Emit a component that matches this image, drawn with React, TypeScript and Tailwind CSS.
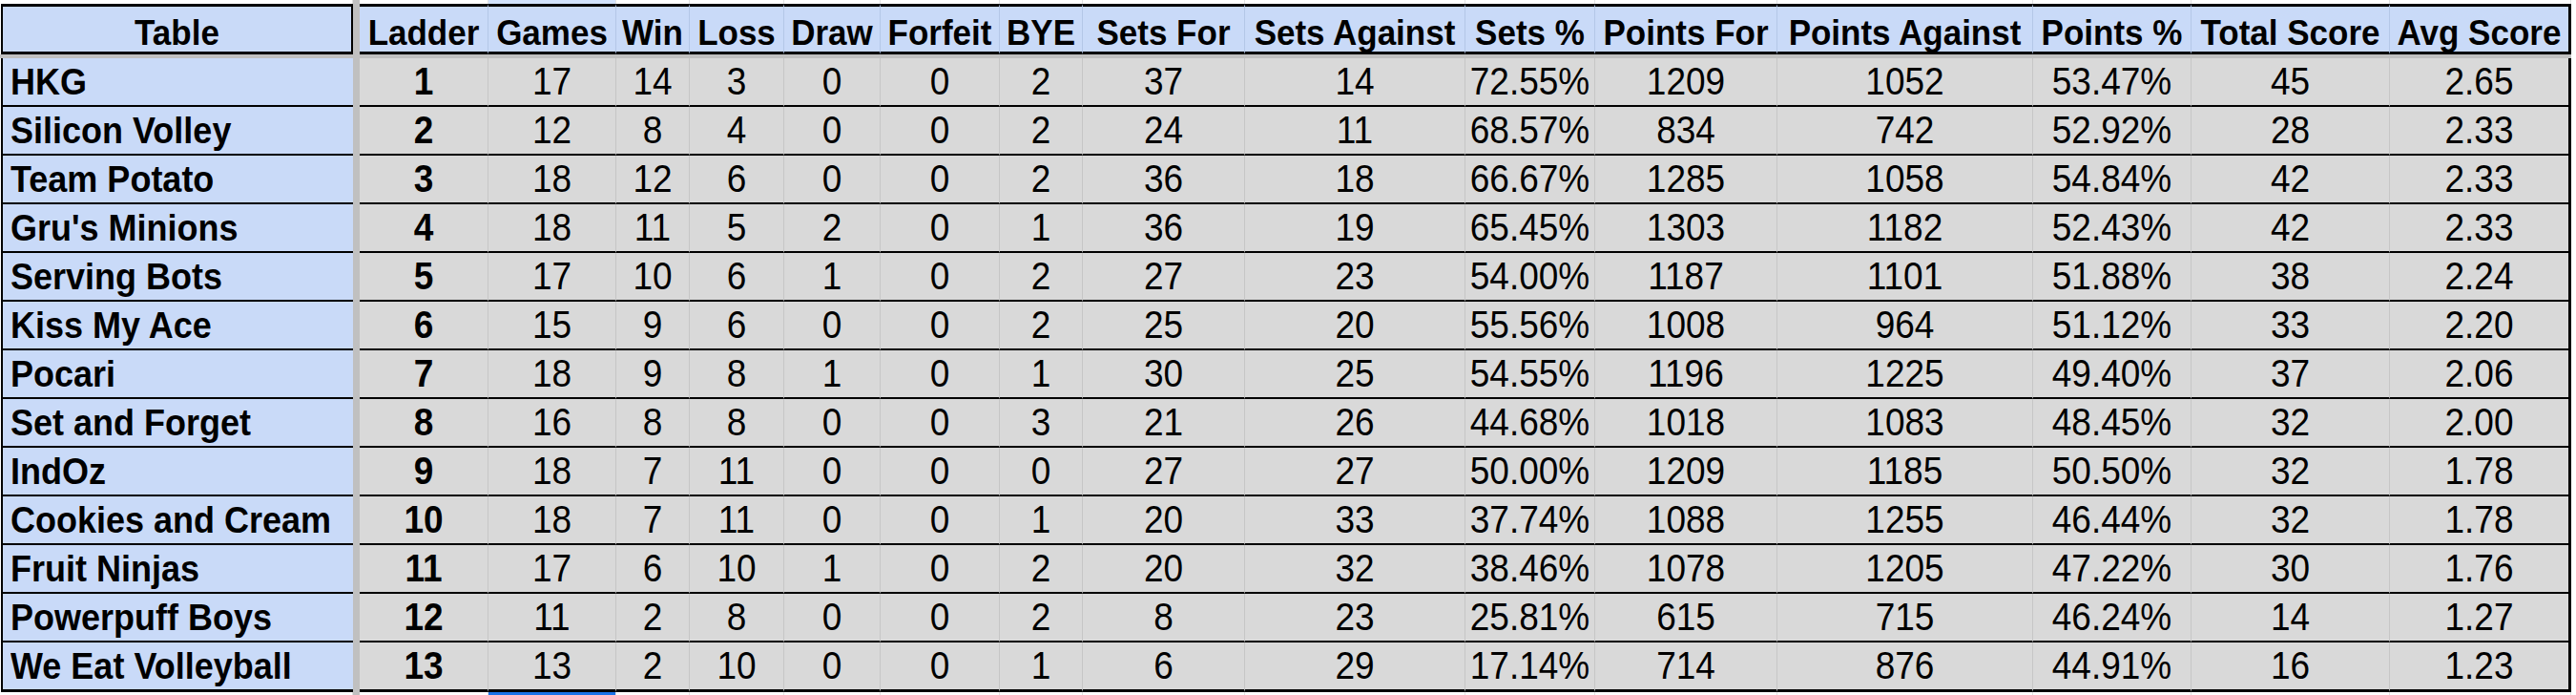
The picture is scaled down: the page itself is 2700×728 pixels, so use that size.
const font = "font-['Liberation_Sans',Arial,sans-serif]";

const cols = [
  { label: "Ladder", w: "w-[135px]" },
  { label: "Games", w: "w-[134px]" },
  { label: "Win", w: "w-[77px]" },
  { label: "Loss", w: "w-[99px]" },
  { label: "Draw", w: "w-[101px]" },
  { label: "Forfeit", w: "w-[125px]" },
  { label: "BYE", w: "w-[87px]" },
  { label: "Sets For", w: "w-[170px]" },
  { label: "Sets Against", w: "w-[231px]" },
  { label: "Sets %", w: "w-[136px]" },
  { label: "Points For", w: "w-[191px]" },
  { label: "Points Against", w: "w-[268px]" },
  { label: "Points %", w: "w-[166px]" },
  { label: "Total Score", w: "w-[208px]" },
  { label: "Avg Score", w: "w-[190px]" },
];

const rows: [string, ...string[]][] = [
  ["HKG", "1", "17", "14", "3", "0", "0", "2", "37", "14", "72.55%", "1209", "1052", "53.47%", "45", "2.65"],
  ["Silicon Volley", "2", "12", "8", "4", "0", "0", "2", "24", "11", "68.57%", "834", "742", "52.92%", "28", "2.33"],
  ["Team Potato", "3", "18", "12", "6", "0", "0", "2", "36", "18", "66.67%", "1285", "1058", "54.84%", "42", "2.33"],
  ["Gru's Minions", "4", "18", "11", "5", "2", "0", "1", "36", "19", "65.45%", "1303", "1182", "52.43%", "42", "2.33"],
  ["Serving Bots", "5", "17", "10", "6", "1", "0", "2", "27", "23", "54.00%", "1187", "1101", "51.88%", "38", "2.24"],
  ["Kiss My Ace", "6", "15", "9", "6", "0", "0", "2", "25", "20", "55.56%", "1008", "964", "51.12%", "33", "2.20"],
  ["Pocari", "7", "18", "9", "8", "1", "0", "1", "30", "25", "54.55%", "1196", "1225", "49.40%", "37", "2.06"],
  ["Set and Forget", "8", "16", "8", "8", "0", "0", "3", "21", "26", "44.68%", "1018", "1083", "48.45%", "32", "2.00"],
  ["IndOz", "9", "18", "7", "11", "0", "0", "0", "27", "27", "50.00%", "1209", "1185", "50.50%", "32", "1.78"],
  ["Cookies and Cream", "10", "18", "7", "11", "0", "0", "1", "20", "33", "37.74%", "1088", "1255", "46.44%", "32", "1.78"],
  ["Fruit Ninjas", "11", "17", "6", "10", "1", "0", "2", "20", "32", "38.46%", "1078", "1205", "47.22%", "30", "1.76"],
  ["Powerpuff Boys", "12", "11", "2", "8", "0", "0", "2", "8", "23", "25.81%", "615", "715", "46.24%", "14", "1.27"],
  ["We Eat Volleyball", "13", "13", "2", "10", "0", "0", "1", "6", "29", "17.14%", "714", "876", "44.91%", "16", "1.23"],
];

// sheet glyphs come out a bit taller than plain Arial
function Txt({ children, left }: { children: React.ReactNode; left?: boolean }) {
  return <span className={`inline-block scale-y-[1.08] ${left ? "origin-left" : ""}`}>{children}</span>;
}

function EdgeStrip({ h }: { h: string }) {
  // the bits of the sheet above / below the table
  return (
    <div className={`flex ${h}`}>
      <div className="w-[370px] border-r border-[#e2e2e2] bg-white" />
      <div className="w-[7px] bg-[#c0c0c0]" />
      {cols.map((c, i) => (
        <div
          key={c.label}
          className={`${c.w} border-r border-[#e2e2e2] ${i === 1 ? (h === "h-[4px]" ? "bg-[#d3e3fd]" : "bg-[#1a73e8]") : "bg-white"}`}
        />
      ))}
    </div>
  );
}

export default function App() {
  return (
    <div className={`${font} text-black w-[2700px] h-[728px] bg-white overflow-hidden`}>
      <EdgeStrip h="h-[4px]" />

      {/* header */}
      <div className="flex h-[53px]">
        <div className="ml-[1px] w-[369px] flex items-center justify-center pt-[5px] bg-[#c9daf8] border-2 border-t-[3px] border-b-[3px] border-black text-[35px] font-bold leading-none">
          <Txt>Table</Txt>
        </div>
        <div className="w-[7px] bg-[#c0c0c0]" />
        {cols.map((c, i) => (
          <div
            key={c.label}
            className={`${c.w} flex items-center justify-center pt-[5px] bg-[#c9daf8] border-y-[3px] border-black text-[35px] font-bold leading-none whitespace-nowrap ${
              i === cols.length - 1 ? "border-r-[3px]" : "border-r border-r-[#b4c7e7]"
            }`}
          >
            <Txt>{c.label}</Txt>
          </div>
        ))}
      </div>

      {/* frozen row line */}
      <div className="h-[4px] w-[2695px] bg-[#c0c0c0]" />

      {rows.map((r, ri) => {
        const last = ri === rows.length - 1;
        const b = last ? "border-b-[3px] h-[52px]" : "border-b-2 h-[51px]";
        return (
          <div key={r[0]} className="flex">
            <div className={`ml-[1px] w-[369px] ${b} border-l-2 border-black bg-[#c9daf8] flex items-center pl-[8px] text-[36px] font-bold leading-none whitespace-nowrap`}>
              <Txt left>{r[0]}</Txt>
            </div>
            <div className={`w-[7px] bg-[#c0c0c0] ${last ? "h-[52px]" : "h-[51px]"}`} />
            {cols.map((c, ci) => (
              <div
                key={c.label}
                className={`${c.w} ${b} border-black bg-[#d9d9d9] flex items-center justify-center text-[37px] leading-none whitespace-nowrap ${
                  ci === 0 ? "font-bold" : ""
                } ${ci === cols.length - 1 ? "border-r-[3px]" : "border-r border-r-[#c6c6c6]"}`}
              >
                <Txt>{r[ci + 1]}</Txt>
              </div>
            ))}
          </div>
        );
      })}

      <EdgeStrip h="h-[3px]" />
    </div>
  );
}
